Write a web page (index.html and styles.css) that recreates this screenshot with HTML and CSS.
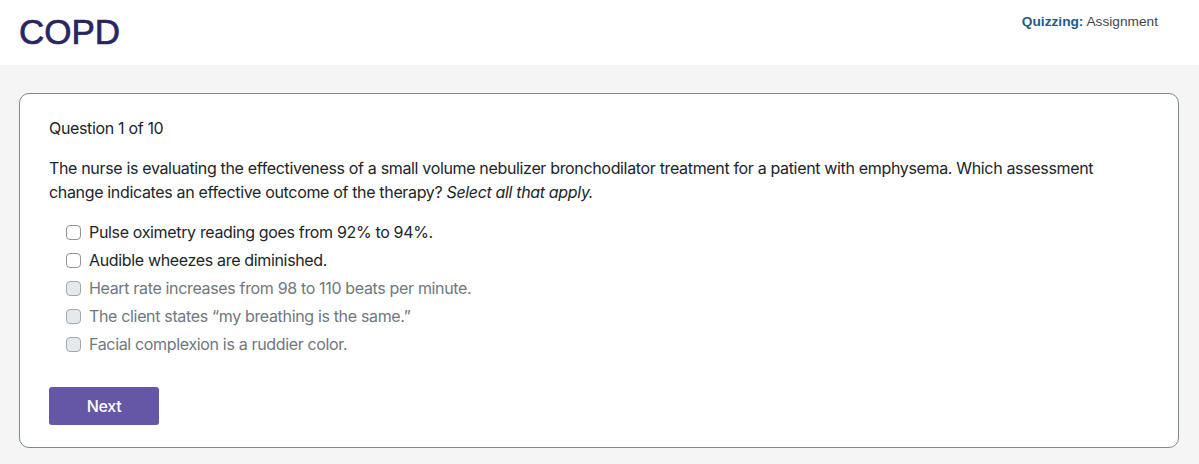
FILE: index.html
```html
<!DOCTYPE html>
<html lang="en">
<head>
<meta charset="utf-8">
<title>COPD</title>
<link rel="stylesheet" href="styles.css">
</head>
<body>
<header class="header">
  <h1 class="title">COPD</h1>
  <div class="meta"><span class="meta-label">Quizzing:</span> Assignment</div>
</header>
<main class="page">
  <section class="card">
    <p class="counter">Question 1 of 10</p>
    <p class="question">The nurse is evaluating the effectiveness of a small volume nebulizer bronchodilator treatment for a patient with emphysema. Which assessment change indicates an effective outcome of the therapy? <em>Select all that apply.</em></p>
    <ul class="options">
      <li class="option"><span class="box"></span>Pulse oximetry reading goes from 92% to 94%.</li>
      <li class="option"><span class="box"></span>Audible wheezes are diminished.</li>
      <li class="option is-muted"><span class="box"></span>Heart rate increases from 98 to 110 beats per minute.</li>
      <li class="option is-muted"><span class="box"></span>The client states “my breathing is the same.”</li>
      <li class="option is-muted"><span class="box"></span>Facial complexion is a ruddier color.</li>
    </ul>
    <button class="btn" type="button">Next</button>
  </section>
</main>
</body>
</html>
```
FILE: styles.css
```css
* { box-sizing: border-box; }
html, body { margin: 0; padding: 0; }
body {
  background: #f4f5f4;
  font-family: Inter, "Liberation Sans", sans-serif;
  color: #212529;
}
.header {
  background: #ffffff;
  height: 65px;
  display: flex;
  justify-content: space-between;
  align-items: flex-start;
  padding: 0 41px 0 19px;
}
.title {
  margin: 12px 0 0;
  font-family: "Liberation Sans", Arial, sans-serif;
  font-weight: 400;
  font-size: 35px;
  line-height: 40px;
  color: #2a2562;
  -webkit-text-stroke: 0.7px #2a2562;
}
.meta {
  margin-top: 14px;
  font-family: "Liberation Sans", Arial, sans-serif;
  font-size: 13.7px;
  line-height: 16px;
  color: #454545;
}
.meta-label { font-weight: 700; color: #245a8c; }
.page { padding: 28px 20px 17px 19px; }
.card {
  background: #ffffff;
  border: 1px solid #7d8a93;
  border-radius: 10px;
  padding: 22px 29px 22px 29px;
}
.counter, .question {
  margin: 0;
  font-size: 16px;
  line-height: 24px;
  letter-spacing: -0.34px;
}
.question { margin-top: 16px; }
.options {
  list-style: none;
  margin: 14px 0 0;
  padding: 0 0 0 17px;
}
.option {
  display: flex;
  align-items: center;
  height: 28px;
  font-size: 16px;
  letter-spacing: -0.34px;
}
.box {
  width: 15px;
  height: 15px;
  border: 1px solid #8f959b;
  border-radius: 4px;
  background: #fff;
  margin-right: 8px;
  flex: none;
}
.is-muted { color: #707780; }
.is-muted .box { background: #e5e8ec; border-color: #a3a9b0; }
.btn {
  margin-top: 29px;
  width: 110px;
  height: 38px;
  border: 0;
  border-radius: 3px;
  background: #6557a6;
  color: #ffffff;
  font-family: Inter, "Liberation Sans", sans-serif;
  font-weight: 500;
  font-size: 16px;
  letter-spacing: -0.3px;
  display: block;
}
```
